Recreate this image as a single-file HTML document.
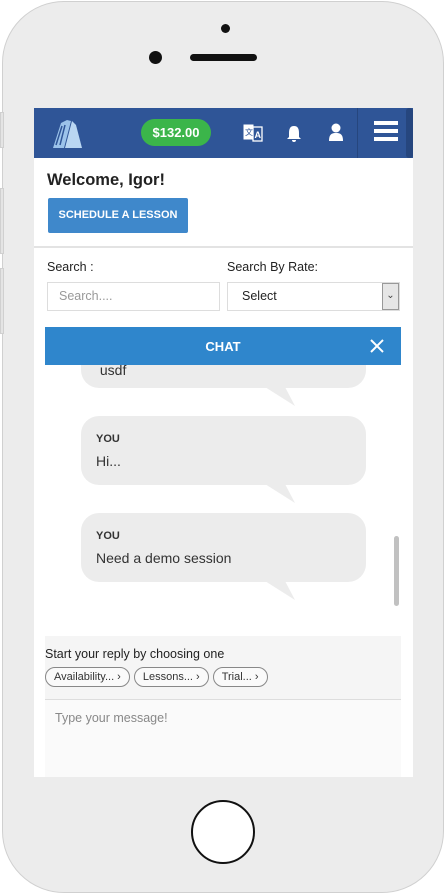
<!DOCTYPE html>
<html><head><meta charset="utf-8"><style>
*{box-sizing:border-box;margin:0;padding:0}
body{width:446px;height:894px;background:#fff;position:relative;overflow:hidden;font-family:"Liberation Sans",sans-serif}
.phone{position:absolute;left:2px;top:1px;width:442px;height:892px;border:1.5px solid #d0d0d0;border-radius:62px;background:#ececec}
.btn{position:absolute;left:0;width:4px;background:#e4e4e4;border:1px solid #d0d0d0}
.screen{position:absolute;left:34px;top:108px;width:379px;height:669px;background:#fff;overflow:hidden}
.hdr{position:absolute;left:0;top:0;width:379px;height:50px;background:#2f5597}
.pill{position:absolute;left:107px;top:11px;width:70px;height:27px;border-radius:14px;background:#3bb54a;color:#fff;font-weight:bold;font-size:13px;text-align:center;line-height:27px}
.chatbody{position:absolute;left:11px;top:257px;width:356px;height:271px;background:#fff;overflow:hidden}
.bub{position:absolute;left:36px;width:285px;background:#ececec;border-radius:18px;padding:13px 15px;font-size:14px;color:#333}
.tail{position:absolute;left:220px}
.chip{display:inline-block;border:1px solid #888;border-radius:12px;padding:3px 8px;font-size:11px;color:#333;margin-right:4px;background:#fafafa}
</style></head><body>
<div class="phone"></div>
<div class="btn" style="top:112px;height:36px"></div>
<div class="btn" style="top:188px;height:66px"></div>
<div class="btn" style="top:268px;height:66px"></div>
<div style="position:absolute;left:221px;top:24px;width:9px;height:9px;border-radius:50%;background:#111"></div>
<div style="position:absolute;left:149px;top:51px;width:13px;height:13px;border-radius:50%;background:#111"></div>
<div style="position:absolute;left:190px;top:54px;width:67px;height:7px;border-radius:4px;background:#111"></div>
<div style="position:absolute;left:191px;top:800px;width:64px;height:64px;border-radius:50%;border:2px solid #111;background:#fff"></div>
<div class="screen">
 <div class="hdr">
  <svg style="position:absolute;left:15px;top:9px" width="38" height="32" viewBox="0 0 38 32"><path d="M4 31 L12 6 L18 3 L22 4 L15 31Z" fill="#9cc3ea"/><path d="M16 31 L23 4 L27 8 L33 31Z" fill="#b9d6f2"/><path d="M7 28 L13 9 M11 28 L16 8" stroke="#2f5597" stroke-width="1.5"/></svg>
  <div class="pill">$132.00</div>
  <svg style="position:absolute;left:209px;top:15px" width="20" height="20" viewBox="0 0 20 20"><rect x="1" y="2" width="9" height="14" fill="#fff" stroke="#fff"/><rect x="10" y="4" width="9" height="14" fill="#2f5597" stroke="#fff" stroke-width="1.3"/><text x="11.5" y="15" font-size="9" fill="#fff" font-family="Liberation Sans" font-weight="bold">A</text><text x="2" y="12" font-size="8" fill="#2f5597">文</text></svg>
  <svg style="position:absolute;left:252px;top:17px" width="16" height="18" viewBox="0 0 16 18"><path d="M8 1 C4 1 3 4 3 8 L3 12 L1 14 L15 14 L13 12 L13 8 C13 4 12 1 8 1Z M6 15 A2 2 0 0 0 10 15Z" fill="#fff"/></svg>
  <svg style="position:absolute;left:294px;top:15px" width="16" height="18" viewBox="0 0 16 18"><circle cx="8" cy="5" r="4.5" fill="#fff"/><path d="M1 18 C1 11 4 10 8 10 C12 10 15 11 15 18Z" fill="#fff"/></svg>
  <div style="position:absolute;left:323px;top:0;width:1px;height:50px;background:#26467e"></div>
  <div style="position:absolute;left:340px;top:13px;width:24px;height:4px;background:#fff;box-shadow:0 8px 0 #fff,0 16px 0 #fff"></div>
  <div style="position:absolute;left:372px;top:0;width:7px;height:50px;background:#26467e;border-radius:3px"></div>
 </div>
 <div style="position:absolute;left:13px;top:63px;font-size:16.5px;font-weight:bold;color:#222">Welcome, Igor!</div>
 <div style="position:absolute;left:14px;top:90px;width:140px;height:35px;background:#3f88cb;border-radius:2px;color:#fff;font-size:11px;font-weight:bold;text-align:center;line-height:35px">SCHEDULE A LESSON</div>
 <div style="position:absolute;left:0;top:138px;width:379px;height:2px;background:#e3e3e3"></div>
 <div style="position:absolute;left:13px;top:152px;font-size:12.5px;color:#222">Search :</div>
 <div style="position:absolute;left:193px;top:152px;font-size:12.5px;color:#222">Search By Rate:</div>
 <div style="position:absolute;left:13px;top:174px;width:173px;height:29px;border:1px solid #ddd;font-size:12.5px;color:#999;padding:6px 11px">Search....</div>
 <div style="position:absolute;left:193px;top:174px;width:173px;height:29px;border:1px solid #ddd;font-size:12.5px;color:#222;padding:6px 14px">Select</div>
 <div style="position:absolute;left:348px;top:175px;width:17px;height:27px;background:#e6e6e6;border:1px solid #999;font-size:10px;text-align:center;line-height:24px;color:#444">⌄</div>
 <div style="position:absolute;left:11px;top:219px;width:356px;height:38px;background:#2f86cc;color:#fff;font-size:13px;font-weight:bold;text-align:center;line-height:39px">CHAT
  <svg style="position:absolute;left:325px;top:12px" width="14" height="14" viewBox="0 0 14 14"><path d="M1 1 L13 13 M13 1 L1 13" stroke="#fff" stroke-width="2"/></svg></div>
 <div class="chatbody">
  <div class="bub" style="top:-48px;height:71px"><br><br>&nbsp;usdf</div>
  <svg class="tail" style="top:22px" width="32" height="20"><polygon points="0,0 20,0 30,19" fill="#ececec"/></svg>
  <div class="bub" style="top:51px;height:69px"><b style="font-size:11px">YOU</b><div style="margin-top:8px">Hi...</div></div>
  <svg class="tail" style="top:119px" width="32" height="20"><polygon points="0,0 20,0 30,19" fill="#ececec"/></svg>
  <div class="bub" style="top:148px;height:69px"><b style="font-size:11px">YOU</b><div style="margin-top:8px">Need a demo session</div></div>
  <svg class="tail" style="top:216px" width="32" height="20"><polygon points="0,0 20,0 30,19" fill="#ececec"/></svg>
  <div style="position:absolute;left:349px;top:171px;width:5px;height:70px;background:#c1c1c1;border-radius:3px"></div>
 </div>
 <div style="position:absolute;left:11px;top:528px;width:356px;height:64px;background:#f5f5f5;padding:11px 0 0 0">
  <div style="font-size:12.5px;color:#222">Start your reply by choosing one</div>
  <div style="margin-top:6px"><span class="chip">Availability... ›</span><span class="chip">Lessons... ›</span><span class="chip">Trial... ›</span></div>
 </div>
 <div style="position:absolute;left:11px;top:591px;width:356px;height:1px;background:#ddd"></div>
 <div style="position:absolute;left:11px;top:592px;width:356px;height:77px;background:#fafafa;padding:11px 10px;font-size:12.5px;color:#888">Type your message!</div>
</div>
</body></html>
